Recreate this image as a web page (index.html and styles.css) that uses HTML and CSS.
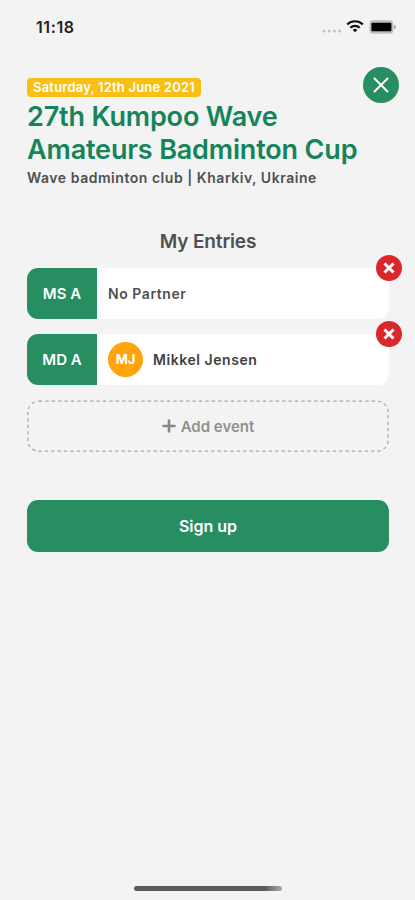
FILE: index.html
```html
<!DOCTYPE html>
<html lang="en">
<head>
  <meta charset="UTF-8" />
  <meta name="viewport" content="width=device-width, initial-scale=1" />
  <title>27th Kumpoo Wave Amateurs Badminton Cup</title>
  <link rel="stylesheet" href="styles.css">
</head>
<body>
  <div class="status-bar">
    <span class="time">11:18</span>
    <div class="status-icons">
      <svg class="signal" width="20" height="4" viewBox="0 0 20 4" fill="#c4c4c4">
        <circle cx="2" cy="2" r="1.5" />
        <circle cx="7.2" cy="2" r="1.5" />
        <circle cx="12.4" cy="2" r="1.5" />
        <circle cx="17.6" cy="2" r="1.5" />
      </svg>
      <svg class="wifi" width="18" height="14" viewBox="0 0 18 14" fill="none" stroke="#111" stroke-width="2.2">
        <path d="M1.2 5.4a11.2 11.2 0 0 1 15.6 0" />
        <path d="M4.3 8.7a6.8 6.8 0 0 1 9.4 0" />
        <path d="M9 13.2L6.7 10.9a3.3 3.3 0 0 1 4.6 0z" fill="#111" stroke="none" />
      </svg>
      <svg class="battery" width="28" height="14" viewBox="0 0 28 14">
        <rect x="0.5" y="0.2" width="23.8" height="13.6" rx="3.5" fill="#bdbdbd" />
        <rect x="2.4" y="2.8" width="20" height="8.4" rx="1" fill="#000" />
        <path d="M25 4.6q2 .6 2 2.4t-2 2.4z" fill="#aaa" />
      </svg>
    </div>
  </div>

  <header class="event">
    <div class="event-info">
      <span class="date">Saturday, 12th June 2021</span>
      <h1>27th Kumpoo Wave<br>Amateurs Badminton Cup</h1>
      <p class="place">Wave badminton club | Kharkiv, Ukraine</p>
    </div>
    <button class="close" aria-label="Close">
      <svg width="16" height="16" viewBox="0 0 16 16" stroke="#fff" stroke-width="2" stroke-linecap="round">
        <path d="M1.5 1.5l13 13M14.5 1.5l-13 13" />
      </svg>
    </button>
  </header>

  <main>
    <h2>My Entries</h2>

    <div class="entry">
      <span class="category">MS A</span>
      <span class="partner empty">No Partner</span>
      <button class="remove" aria-label="Remove">
        <svg width="12" height="12" viewBox="0 0 12 12" stroke="#fff" stroke-width="3">
          <path d="M1.5 1.5l9 9M10.5 1.5l-9 9" />
        </svg>
      </button>
    </div>

    <div class="entry">
      <span class="category">MD A</span>
      <span class="avatar">MJ</span>
      <span class="partner">Mikkel Jensen</span>
      <button class="remove" aria-label="Remove">
        <svg width="12" height="12" viewBox="0 0 12 12" stroke="#fff" stroke-width="3">
          <path d="M1.5 1.5l9 9M10.5 1.5l-9 9" />
        </svg>
      </button>
    </div>

    <button class="add-event">
      <svg class="dashes" width="362" height="52" viewBox="0 0 362 52">
        <rect x="0.9" y="1.2" width="360.2" height="50" rx="11" />
      </svg>
      <svg width="14" height="14" viewBox="0 0 14 14" stroke="#888" stroke-width="2.6" stroke-linecap="round">
        <path d="M7 1.5v11M1.5 7h11" />
      </svg>
      <span class="add-label">Add event</span>
    </button>

    <button class="sign-up">Sign up</button>
  </main>

  <div class="home-indicator"></div>
</body>
</html>
```

FILE: styles.css
```css
* {
  box-sizing: border-box;
}
body {
  display: flex;
  flex-direction: column;
  height: 900px;
  margin: 0;
  background: #f3f3f3;
  color: #505050;
  font-family: Inter, sans-serif;
  font-weight: 600;
}
button {
  padding: 0;
  border: none;
  font: inherit;
  cursor: pointer;
}
h1, h2, p {
  margin: 0;
}
.status-bar {
  display: flex;
  justify-content: space-between;
  height: 67px;
  padding: 17px 18px 0 36px;
}
.time {
  font-size: 16px;
  line-height: 20px;
  letter-spacing: 0.6px;
  color: #222;
}
.status-icons {
  display: flex;
  align-items: flex-start;
}
.signal {
  margin-top: 12px;
}
.wifi {
  margin: 2px 5px 0 4px;
}
.battery {
  margin-top: 3px;
}
.event {
  display: flex;
  justify-content: space-between;
  height: 162px;
  padding: 0 16px 0 27px;
}
.event-info {
  flex: 1;
  margin-right: -30px;
  padding-top: 11px;
}
.date {
  display: block;
  width: 174px;
  height: 19px;
  border-radius: 4px;
  background: #f9c013;
  color: #fff;
  font-size: 13px;
  line-height: 19px;
  letter-spacing: 0.2px;
  text-align: center;
  white-space: nowrap;
}
h1 {
  padding-top: 3px;
  color: #15845a;
  font-size: 27px;
  font-weight: 600;
  line-height: 33px;
  letter-spacing: -0.16px;
  white-space: nowrap;
}
.place {
  font-size: 14px;
  line-height: 24px;
  letter-spacing: 0.53px;
}
.close {
  display: flex;
  align-items: center;
  justify-content: center;
  width: 36px;
  height: 36px;
  border-radius: 50%;
  background: #268e60;
}
main {
  display: flex;
  flex-direction: column;
  padding: 0 26px 0 27px;
}
h2 {
  height: 39px;
  font-size: 19px;
  font-weight: 600;
  line-height: 25px;
  letter-spacing: -0.15px;
  text-align: center;
}
.entry {
  position: relative;
  display: flex;
  align-items: center;
  height: 51px;
  margin-bottom: 15px;
  border-radius: 11px;
  background: #fff;
  font-size: 14px;
}
.category {
  display: flex;
  align-items: center;
  justify-content: center;
  width: 70px;
  height: 100%;
  margin-right: 11px;
  border-radius: 11px 0 0 11px;
  background: #268e60;
  color: #fff;
  font-size: 15px;
}
.avatar {
  width: 35px;
  height: 35px;
  margin-right: 10px;
  border-radius: 50%;
  background: #ffa40b;
  color: #fff;
  font-size: 13px;
  font-weight: 700;
  line-height: 35px;
  text-align: center;
}
.partner {
  color: #404040;
  letter-spacing: 0.56px;
}
.partner.empty {
  color: #505050;
}
/* sits on the top right corner of the card */
.remove {
  position: absolute;
  top: -13px;
  right: -13px;
  display: flex;
  align-items: center;
  justify-content: center;
  width: 26px;
  height: 26px;
  border-radius: 50%;
  background: #d9272b;
}
.add-event {
  position: relative;
  display: flex;
  align-items: center;
  justify-content: center;
  gap: 5px;
  height: 52px;
  margin-bottom: 48px;
  background: none;
  color: #909090;
  font-size: 15px;
}
.dashes {
  position: absolute;
  top: 0;
  left: 0;
  fill: none;
  stroke: #a6a6a6;
  stroke-width: 1.2;
  stroke-dasharray: 3.3 3.1;
}
.sign-up {
  height: 52px;
  border-radius: 11px;
  background: #268e60;
  color: #fff;
  font-size: 16px;
}
.home-indicator {
  width: 148px;
  height: 5px;
  margin: auto auto 9px 134px;
  border-radius: 3px;
  background: linear-gradient(to right, #5c5c5c 88%, #aaa);
}
```
